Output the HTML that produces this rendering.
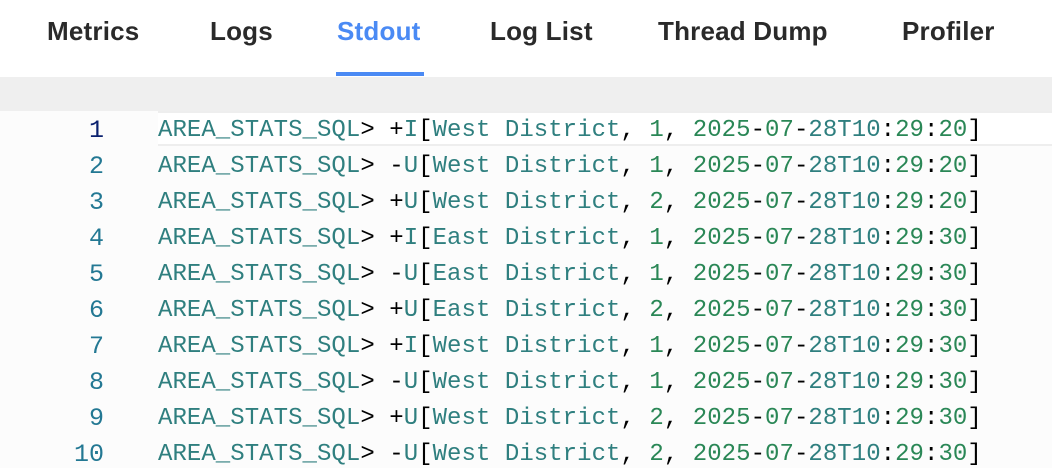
<!DOCTYPE html>
<html><head><style>
body{margin:0;width:1052px;height:468px;overflow:hidden;background:#fff;font-family:"Liberation Sans",sans-serif}
.tabs{position:absolute;top:0;left:0;width:1052px;height:77px;background:#fff}
.tab{position:absolute;top:14px;font-size:26px;font-weight:bold;color:#2a2a2a;line-height:34px;letter-spacing:0.2px}
.act{color:#4a8af4}
.ul{position:absolute;left:336px;top:72px;width:88px;height:4px;background:#4a8af4}
.band{position:absolute;top:77px;left:0;width:1052px;height:34px;background:#efefef}
.ed{position:absolute;top:111px;left:0;width:1052px;height:357px;background:#fcfcfc}
.cur{position:absolute;top:111px;left:158px;width:894px;height:35px;background:#fff;border-top:2px solid #eee;border-bottom:2px solid #eee;box-sizing:border-box}
.ln{position:absolute;left:40px;width:64px;text-align:right;font-family:"Liberation Mono",monospace;font-size:25px;color:#237893}
.code{position:absolute;left:158px;font-family:"Liberation Mono",monospace;font-size:24px;letter-spacing:0.05px;color:#000;white-space:pre}
.t{color:#2f7f7f}.g{color:#2a8756}
</style></head><body>
<div class="tabs">
<div class="tab" style="left:47px">Metrics</div>
<div class="tab" style="left:210px">Logs</div>
<div class="tab act" style="left:337px">Stdout</div>
<div class="tab" style="left:490px">Log List</div>
<div class="tab" style="left:658px">Thread Dump</div>
<div class="tab" style="left:902px">Profiler</div>
<div class="ul"></div>
</div>
<div class="band"></div>
<div class="ed"></div>
<div class="cur"></div>
<div id="lines">
<div class="ln" style="top:116px;color:#0b216f">1</div>
<div class="code" style="top:117px"><span class="t">AREA_STATS_SQL</span>&gt; +<span class="t">I</span>[<span class="t">West District</span>, <span class="g">1</span>, <span class="g">2025</span>-<span class="g">07</span>-<span class="t">28T10</span>:<span class="g">29</span>:<span class="g">20</span>]</div>
<div class="ln" style="top:152px">2</div>
<div class="code" style="top:153px"><span class="t">AREA_STATS_SQL</span>&gt; -<span class="t">U</span>[<span class="t">West District</span>, <span class="g">1</span>, <span class="g">2025</span>-<span class="g">07</span>-<span class="t">28T10</span>:<span class="g">29</span>:<span class="g">20</span>]</div>
<div class="ln" style="top:188px">3</div>
<div class="code" style="top:189px"><span class="t">AREA_STATS_SQL</span>&gt; +<span class="t">U</span>[<span class="t">West District</span>, <span class="g">2</span>, <span class="g">2025</span>-<span class="g">07</span>-<span class="t">28T10</span>:<span class="g">29</span>:<span class="g">20</span>]</div>
<div class="ln" style="top:224px">4</div>
<div class="code" style="top:225px"><span class="t">AREA_STATS_SQL</span>&gt; +<span class="t">I</span>[<span class="t">East District</span>, <span class="g">1</span>, <span class="g">2025</span>-<span class="g">07</span>-<span class="t">28T10</span>:<span class="g">29</span>:<span class="g">30</span>]</div>
<div class="ln" style="top:260px">5</div>
<div class="code" style="top:261px"><span class="t">AREA_STATS_SQL</span>&gt; -<span class="t">U</span>[<span class="t">East District</span>, <span class="g">1</span>, <span class="g">2025</span>-<span class="g">07</span>-<span class="t">28T10</span>:<span class="g">29</span>:<span class="g">30</span>]</div>
<div class="ln" style="top:296px">6</div>
<div class="code" style="top:297px"><span class="t">AREA_STATS_SQL</span>&gt; +<span class="t">U</span>[<span class="t">East District</span>, <span class="g">2</span>, <span class="g">2025</span>-<span class="g">07</span>-<span class="t">28T10</span>:<span class="g">29</span>:<span class="g">30</span>]</div>
<div class="ln" style="top:332px">7</div>
<div class="code" style="top:333px"><span class="t">AREA_STATS_SQL</span>&gt; +<span class="t">I</span>[<span class="t">West District</span>, <span class="g">1</span>, <span class="g">2025</span>-<span class="g">07</span>-<span class="t">28T10</span>:<span class="g">29</span>:<span class="g">30</span>]</div>
<div class="ln" style="top:368px">8</div>
<div class="code" style="top:369px"><span class="t">AREA_STATS_SQL</span>&gt; -<span class="t">U</span>[<span class="t">West District</span>, <span class="g">1</span>, <span class="g">2025</span>-<span class="g">07</span>-<span class="t">28T10</span>:<span class="g">29</span>:<span class="g">30</span>]</div>
<div class="ln" style="top:404px">9</div>
<div class="code" style="top:405px"><span class="t">AREA_STATS_SQL</span>&gt; +<span class="t">U</span>[<span class="t">West District</span>, <span class="g">2</span>, <span class="g">2025</span>-<span class="g">07</span>-<span class="t">28T10</span>:<span class="g">29</span>:<span class="g">30</span>]</div>
<div class="ln" style="top:440px">10</div>
<div class="code" style="top:441px"><span class="t">AREA_STATS_SQL</span>&gt; -<span class="t">U</span>[<span class="t">West District</span>, <span class="g">2</span>, <span class="g">2025</span>-<span class="g">07</span>-<span class="t">28T10</span>:<span class="g">29</span>:<span class="g">30</span>]</div>
</div>
</body></html>
